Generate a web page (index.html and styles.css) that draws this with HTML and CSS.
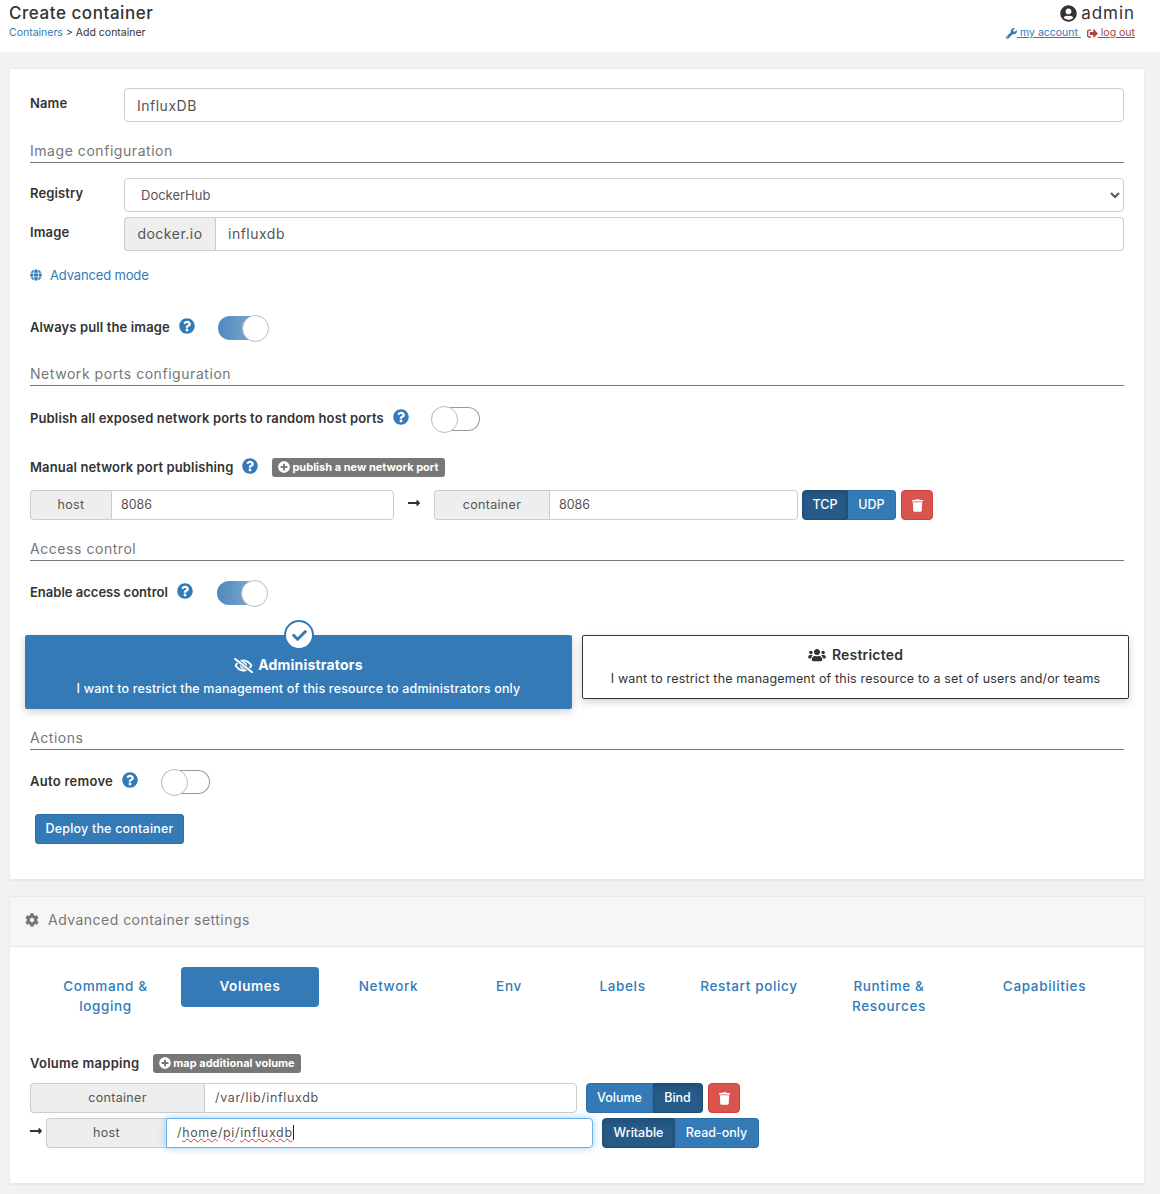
FILE: index.html
```html
<!DOCTYPE html>
<html lang="en">
<head>
<meta charset="utf-8">
<title>Create container</title>
<link rel="stylesheet" href="styles.css">
</head>
<body>
<svg class="sprite" aria-hidden="true">
  <symbol id="i-q" viewBox="0 0 512 512"><path d="M504 256c0 136.997-111.043 248-248 248S8 392.997 8 256C8 119.083 119.043 8 256 8s248 111.083 248 248zM262.655 90c-54.497 0-89.255 22.957-116.549 63.758-3.536 5.286-2.353 12.415 2.715 16.258l34.699 26.31c5.205 3.947 12.621 3.008 16.665-2.122 17.864-22.658 30.113-35.797 57.303-35.797 20.429 0 45.698 13.148 45.698 32.958 0 14.976-12.363 22.667-32.534 33.976C247.128 238.528 216 254.941 216 296v4c0 6.627 5.373 12 12 12h56c6.627 0 12-5.373 12-12v-1.333c0-28.462 83.186-29.647 83.186-106.667 0-58.002-60.165-102-116.531-102zM256 338c-25.365 0-46 20.635-46 46 0 25.364 20.635 46 46 46s46-20.636 46-46c0-25.365-20.635-46-46-46z"/></symbol>
  <symbol id="i-user" viewBox="0 0 496 512"><path d="M248 8C111 8 0 119 0 256s111 248 248 248 248-111 248-248S385 8 248 8zm0 96c48.6 0 88 39.4 88 88s-39.4 88-88 88-88-39.4-88-88 39.4-88 88-88zm0 344c-58.7 0-111.3-26.6-146.5-68.2 18.8-35.4 55.6-59.8 98.5-59.8 2.4 0 4.8.4 7.1 1.1 13 4.2 26.6 6.9 40.9 6.9 14.3 0 28-2.7 40.9-6.9 2.3-.7 4.7-1.1 7.1-1.1 42.9 0 79.7 24.4 98.5 59.8C359.3 421.4 306.7 448 248 448z"/></symbol>
  <symbol id="i-trash" viewBox="0 0 448 512"><path d="M432 32H312l-9.4-18.7A24 24 0 0 0 281.1 0H166.8a23.72 23.72 0 0 0-21.4 13.3L136 32H16A16 16 0 0 0 0 48v32a16 16 0 0 0 16 16h416a16 16 0 0 0 16-16V48a16 16 0 0 0-16-16zM53.2 467a48 48 0 0 0 47.9 45h245.8a48 48 0 0 0 47.9-45L416 128H32z"/></symbol>
  <symbol id="i-check" viewBox="0 0 512 512"><path d="M173.898 439.404l-166.4-166.4c-9.997-9.997-9.997-26.206 0-36.204l36.203-36.204c9.997-9.998 26.207-9.998 36.204 0L192 312.69 432.095 72.596c9.997-9.997 26.207-9.997 36.204 0l36.203 36.204c9.997 9.997 9.997 26.206 0 36.204l-294.4 294.401c-9.998 9.997-26.207 9.997-36.204-.001z"/></symbol>
  <symbol id="i-plus" viewBox="0 0 512 512"><path d="M256 8C119 8 8 119 8 256s111 248 248 248 248-111 248-248S393 8 256 8zm144 276c0 6.6-5.4 12-12 12h-92v92c0 6.6-5.4 12-12 12h-56c-6.6 0-12-5.4-12-12v-92h-92c-6.6 0-12-5.4-12-12v-56c0-6.6 5.4-12 12-12h92v-92c0-6.6 5.4-12 12-12h56c6.6 0 12 5.4 12 12v92h92c6.6 0 12 5.4 12 12v56z"/></symbol>
  <symbol id="i-cog" viewBox="0 0 512 512"><path d="M487.4 315.7l-42.6-24.6c4.3-23.2 4.3-47 0-70.2l42.6-24.6c4.9-2.8 7.1-8.6 5.5-14-11.1-35.6-30-67.8-54.7-94.6-3.8-4.1-10-5.1-14.8-2.3L380.8 110c-17.9-15.4-38.5-27.3-60.8-35.1V25.8c0-5.6-3.9-10.5-9.4-11.7-36.7-8.2-74.3-7.8-109.2 0-5.5 1.2-9.4 6.1-9.4 11.7V75c-22.2 7.9-42.8 19.8-60.8 35.1L88.7 85.5c-4.9-2.8-11-1.9-14.8 2.3-24.7 26.7-43.6 58.9-54.7 94.6-1.7 5.4.6 11.2 5.5 14L67.3 221c-4.3 23.2-4.3 47 0 70.2l-42.6 24.6c-4.9 2.8-7.1 8.6-5.5 14 11.1 35.6 30 67.8 54.7 94.6 3.8 4.1 10 5.1 14.8 2.3l42.6-24.6c17.9 15.4 38.5 27.3 60.8 35.1v49.2c0 5.6 3.9 10.5 9.4 11.7 36.7 8.2 74.3 7.8 109.2 0 5.5-1.2 9.4-6.1 9.4-11.7v-49.2c22.2-7.9 42.8-19.8 60.8-35.1l42.6 24.6c4.9 2.8 11 1.9 14.8-2.3 24.7-26.7 43.6-58.9 54.7-94.6 1.5-5.5-.7-11.3-5.6-14.1zM256 336c-44.1 0-80-35.9-80-80s35.9-80 80-80 80 35.9 80 80-35.9 80-80 80z"/></symbol>
  <symbol id="i-wrench" viewBox="0 0 512 512"><path d="M507.73 109.1c-2.24-9.03-13.54-12.09-20.12-5.51l-74.36 74.36-67.88-11.31-11.31-67.88 74.36-74.36c6.62-6.62 3.43-17.9-5.66-20.16-47.38-11.74-99.55.91-136.58 37.93-39.64 39.64-50.55 97.1-34.05 147.2L18.74 402.76c-24.99 24.99-24.99 65.51 0 90.5 24.99 24.99 65.51 24.99 90.5 0l213.21-213.21c50.12 16.71 107.47 5.68 147.37-34.22 37.07-37.07 49.7-89.32 37.91-136.73zM64 472c-13.25 0-24-10.75-24-24 0-13.26 10.75-24 24-24s24 10.74 24 24c0 13.25-10.75 24-24 24z"/></symbol>
  <symbol id="i-users" viewBox="0 0 640 512"><path d="M96 224c35.3 0 64-28.7 64-64s-28.7-64-64-64-64 28.7-64 64 28.7 64 64 64zm448 0c35.3 0 64-28.7 64-64s-28.7-64-64-64-64 28.7-64 64 28.7 64 64 64zm32 32h-64c-17.6 0-33.5 7.1-45.1 18.6 40.3 22.1 68.9 62 75.1 109.4h66c17.7 0 32-14.3 32-32v-32c0-35.3-28.7-64-64-64zm-256 0c61.9 0 112-50.1 112-112S381.9 32 320 32 208 82.1 208 144s50.1 112 112 112zm76.8 32h-8.3c-20.8 10-43.9 16-68.5 16s-47.6-6-68.5-16h-8.3C179.6 288 128 339.6 128 403.2V432c0 26.5 21.5 48 48 48h288c26.5 0 48-21.5 48-48v-28.8c0-63.6-51.6-115.2-115.2-115.2zm-223.7-13.4C161.5 263.1 145.6 256 128 256H64c-35.3 0-64 28.7-64 64v32c0 17.7 14.3 32 32 32h65.9c6.3-47.4 34.9-87.3 75.2-109.4z"/></symbol>
  <symbol id="i-eye" viewBox="0 0 640 512"><path d="M634 471L36 3.51A16 16 0 0 0 13.51 6l-10 12.49A16 16 0 0 0 6 41l598 467.49a16 16 0 0 0 22.49-2.49l10-12.49A16 16 0 0 0 634 471zM296.79 146.47l134.79 105.38C429.36 191.91 380.48 144 320 144a112.26 112.26 0 0 0-23.21 2.47zm46.42 219.07L208.42 260.16C210.65 320.09 259.53 368 320 368a113 113 0 0 0 23.21-2.46zM320 112c98.65 0 189.09 55 237.93 144a285.53 285.53 0 0 1-44 60.2l37.74 29.5a333.7 333.7 0 0 0 52.9-75.11 32.35 32.35 0 0 0 0-29.19C550.29 135.59 442.93 64 320 64c-36.7 0-71.71 7-104.63 18.81l46.41 36.29c18.94-4.3 38.34-7.1 58.22-7.1zm0 288c-98.65 0-189.08-55-237.93-144a285.47 285.47 0 0 1 44.05-60.19l-37.74-29.5a333.6 333.6 0 0 0-52.89 75.1 32.35 32.35 0 0 0 0 29.19C89.72 376.41 197.08 448 320 448c36.7 0 71.71-7.05 104.63-18.81l-46.41-36.28C359.28 397.2 339.89 400 320 400z"/></symbol>
  <symbol id="i-out" viewBox="0 0 512 512"><path d="M497 273L329 441c-15 15-41 4.5-41-17v-96H152c-13.3 0-24-10.7-24-24v-96c0-13.3 10.7-24 24-24h136V88c0-21.4 25.9-32 41-17l168 168c9.3 9.4 9.3 24.6 0 34zM192 436v-40c0-6.6-5.4-12-12-12H96c-17.7 0-32-14.3-32-32V160c0-17.7 14.3-32 32-32h84c6.6 0 12-5.4 12-12V76c0-6.6-5.4-12-12-12H96c-53 0-96 43-96 96v192c0 53 43 96 96 96h84c6.6 0 12-5.4 12-12z"/></symbol>
  <symbol id="i-globe" viewBox="0 0 496 512"><path d="M336.5 160C322 70.7 287.8 8 248 8s-74 62.7-88.5 152h177zM152 256c0 22.2 1.2 43.5 3.3 64h185.3c2.1-20.5 3.3-41.8 3.3-64s-1.2-43.5-3.3-64H155.3c-2.1 20.5-3.3 41.8-3.3 64zm324.7-96c-28.6-67.9-86.5-120.4-158-141.6 24.4 33.8 41.2 84.7 50 141.6h108zM177.2 18.4C105.8 39.6 47.8 92.1 19.3 160h108c8.7-56.9 25.5-107.8 49.9-141.6zM487.4 192H372.7c2.1 21 3.3 42.5 3.3 64s-1.2 43-3.3 64h114.6c5.5-20.5 8.6-41.8 8.6-64s-3.1-43.5-8.5-64zM120 256c0-21.5 1.2-43 3.3-64H8.6C3.2 212.5 0 233.8 0 256s3.2 43.5 8.6 64h114.6c-2-21-3.2-42.5-3.2-64zm39.5 96c14.5 89.3 48.7 152 88.5 152s74-62.7 88.5-152h-177zm159.3 141.6c71.4-21.2 129.4-73.7 158-141.6h-108c-8.8 56.9-25.6 107.8-50 141.6zM19.3 352c28.6 67.9 86.5 120.4 158 141.6-24.4-33.8-41.2-84.7-50-141.6h-108z"/></symbol>
  <symbol id="i-arrow" viewBox="0 0 448 512"><path d="M313.941 216H12c-6.627 0-12 5.373-12 12v56c0 6.627 5.373 12 12 12h301.941v46.059c0 21.382 25.851 32.09 40.971 16.971l86.059-86.059c9.373-9.373 9.373-24.569 0-33.941l-86.059-86.059c-15.119-15.119-40.971-4.411-40.971 16.971V216z"/></symbol>
</svg>

<header class="topbar">
  <div>
    <div class="title">Create container</div>
    <div class="crumbs"><a class="link" href="#">Containers</a> &gt; Add container</div>
  </div>
  <div class="account">
    <div class="user"><svg class="ico-user"><use href="#i-user"/></svg>admin</div>
    <div class="account-links">
      <a class="link-under" href="#"><svg class="ico-small"><use href="#i-wrench"/></svg> my account </a>
      <a class="link-under danger" href="#"><svg class="ico-small"><use href="#i-out"/></svg> log out</a>
    </div>
  </div>
</header>

<main class="page">
  <section class="card main-card">
    <div class="form-row">
      <label class="row-label">Name</label>
      <input class="control grow" value="InfluxDB">
    </div>

    <h3 class="section first-section">Image configuration</h3>
    <div class="form-row registry">
      <label class="row-label">Registry</label>
      <select class="control grow select"><option>DockerHub</option></select>
    </div>
    <div class="form-row image">
      <label class="row-label">Image</label>
      <div class="group tall grow">
        <span class="addon addon-image">docker.io</span>
        <input class="group-input pad-image" value="influxdb">
      </div>
    </div>
    <div class="advanced"><svg class="ico-globe"><use href="#i-globe"/></svg><a class="link" href="#">Advanced mode</a></div>

    <div class="switch-row pull">
      <span class="strong">Always pull the image</span>
      <svg class="ico-help"><use href="#i-q"/></svg>
      <span class="toggle on toggle-pull"></span>
    </div>

    <h3 class="section net-section">Network ports configuration</h3>
    <div class="switch-row publish">
      <span class="strong">Publish all exposed network ports to random host ports</span>
      <svg class="ico-help"><use href="#i-q"/></svg>
      <span class="toggle toggle-publish"></span>
    </div>

    <div class="manual">
      <span class="strong">Manual network port publishing</span>
      <svg class="ico-help"><use href="#i-q"/></svg>
      <span class="badge badge-port"><svg class="ico-plus"><use href="#i-plus"/></svg>publish a new network port</span>
    </div>

    <div class="port-row">
      <div class="group w-port">
        <span class="addon addon-host">host</span>
        <input class="group-input" value="8086">
      </div>
      <span class="arrow-cell"><svg class="ico-arrow"><use href="#i-arrow"/></svg></span>
      <div class="group w-port">
        <span class="addon addon-cont">container</span>
        <input class="group-input" value="8086">
      </div>
      <div class="btn-group tcp"><span class="btn active w-tcp">TCP</span><span class="btn w-udp">UDP</span></div>
      <span class="btn-del"><svg class="ico-trash"><use href="#i-trash"/></svg></span>
    </div>

    <h3 class="section access-section">Access control</h3>
    <div class="switch-row enable">
      <span class="strong">Enable access control</span>
      <svg class="ico-help"><use href="#i-q"/></svg>
      <span class="toggle on toggle-enable"></span>
    </div>

    <div class="choices">
      <div class="choice selected">
        <span class="check"><svg class="ico-check"><use href="#i-check"/></svg></span>
        <div class="choice-title"><svg class="ico-eye"><use href="#i-eye"/></svg>Administrators</div>
        <div class="choice-text">I want to restrict the management of this resource to administrators only</div>
      </div>
      <div class="choice plain">
        <div class="choice-title"><svg class="ico-users"><use href="#i-users"/></svg>Restricted</div>
        <div class="choice-text">I want to restrict the management of this resource to a set of users and/or teams</div>
      </div>
    </div>

    <h3 class="section actions-section">Actions</h3>
    <div class="switch-row auto">
      <span class="strong">Auto remove</span>
      <svg class="ico-help"><use href="#i-q"/></svg>
      <span class="toggle toggle-auto"></span>
    </div>
    <button class="deploy">Deploy the container</button>
  </section>

  <section class="card adv-card">
    <div class="adv-head"><svg class="ico-cog"><use href="#i-cog"/></svg><span class="adv-title">Advanced container settings</span></div>
    <div class="adv-body">
      <nav class="tabs">
        <a class="tab" href="#">Command &amp; logging</a>
        <a class="tab selected-tab" href="#">Volumes</a>
        <a class="tab" href="#">Network</a>
        <a class="tab" href="#">Env</a>
        <a class="tab" href="#">Labels</a>
        <a class="tab" href="#">Restart policy</a>
        <a class="tab" href="#">Runtime &amp; Resources</a>
        <a class="tab" href="#">Capabilities</a>
      </nav>

      <div class="manual volume-head">
        <span class="strong">Volume mapping</span>
        <span class="badge badge-vol"><svg class="ico-plus"><use href="#i-plus"/></svg>map additional volume</span>
      </div>

      <div class="port-row vol-first">
        <div class="group w-vol1">
          <span class="addon addon-vcont">container</span>
          <input class="group-input pad-vol" value="/var/lib/influxdb">
        </div>
        <div class="btn-group vol-btns"><span class="btn w-volume">Volume</span><span class="btn active w-bind">Bind</span></div>
        <span class="btn-del"><svg class="ico-trash"><use href="#i-trash"/></svg></span>
      </div>
      <div class="port-row vol-second">
        <svg class="ico-arrow arrow-vol"><use href="#i-arrow"/></svg>
        <div class="group w-vol2">
          <span class="addon addon-vhost">host</span>
          <div class="group-input focused pad-vol">/<span class="spell">home</span>/<span class="spell">pi</span>/<span class="spell">influxdb</span><span class="caret"></span></div>
        </div>
        <div class="btn-group vol-btns"><span class="btn active w-writable">Writable</span><span class="btn w-readonly">Read-only</span></div>
      </div>
    </div>
  </section>
</main>
</body>
</html>
```
FILE: styles.css
```css
* { box-sizing: border-box; }
html, body { margin: 0; padding: 0; }
body {
  background: #f2f2f2;
  font-family: Inter, "Noto Sans", sans-serif;
  font-size: 13px;
  color: #333;
  width: 1160px;
  height: 1194px;
  overflow: hidden;
}
.sprite { display: none; }
svg { fill: currentColor; display: block; }
a { text-decoration: none; }
.link { color: #337ab7; }

.topbar {
  height: 52px;
  background: #fff;
  display: flex;
  justify-content: space-between;
  padding: 0 25px 0 9px;
}
.title { font-size: 17px; font-weight: 500; line-height: 20px; margin-top: 3px; letter-spacing: .55px; color: #333; }
.crumbs { font-size: 10.5px; line-height: 14px; margin-top: 3px; color: #333; }
.account { display: flex; flex-direction: column; align-items: flex-end; }
.user { display: flex; align-items: center; font-size: 17px; line-height: 20px; margin-top: 3px; letter-spacing: .95px; }
.ico-user { width: 17px; height: 17px; margin-right: 4px; }
.account-links { display: flex; gap: 6px; font-size: 10.5px; line-height: 14px; margin-top: 3px; }
.link-under { color: #337ab7; text-decoration: underline; display: inline-flex; align-items: center; white-space: pre; }
.danger { color: #a94442; }
.ico-small { width: 11px; height: 11px; }

.page { padding: 16px 15px 0 9px; }
.card {
  background: #fff;
  border: 1px solid #eaeaea;
  box-shadow: 0 1px 1px rgba(0,0,0,.05);
  border-radius: 2px;
}
.main-card { height: 812px; padding: 19px 20px 0; }
.adv-card { height: 288px; margin-top: 16px; }

.form-row { display: flex; height: 34px; }
.row-label { width: 94px; flex: none; font-weight: 600; line-height: 30px; font-size: 13px; color: #333; letter-spacing: .13px; }
.grow { flex: 1; min-width: 0; }
.control {
  height: 34px;
  border: 1px solid #ccc;
  border-radius: 4px;
  padding: 0 12px;
  font: 14px Inter, "Noto Sans", sans-serif;
  color: #555;
  background: #fff;
  letter-spacing: .5px;
}
.select { padding-left: 12px; font-size: 13px; letter-spacing: 0; }
.registry { margin-top: 15px; }
.image { margin-top: 5px; }

.section {
  height: 22px;
  margin: 0;
  border-bottom: 1px solid #777;
  font-size: 14px;
  font-weight: 400;
  line-height: 20px;
  color: #767676;
  letter-spacing: .55px;
}
.first-section { margin-top: 19px; }
.net-section { margin-top: 23px; }
.access-section { margin-top: 19px; }
.actions-section { margin-top: 19px; }

.group { display: flex; height: 30px; }
.tall { height: 34px; }
.addon {
  flex: none;
  background: #eee;
  border: 1px solid #ccc;
  border-right: 0;
  border-radius: 4px 0 0 4px;
  display: flex;
  align-items: center;
  justify-content: center;
  color: #555;
  font-size: 12.5px;
  letter-spacing: .3px;
  padding-bottom: 1px;
}
.group-input {
  flex: 1;
  min-width: 0;
  border: 1px solid #ccc;
  border-radius: 0 4px 4px 0;
  padding: 0 9px;
  font: 12.5px/28px Inter, "Noto Sans", sans-serif;
  color: #555;
  background: #fff;
  outline: 0;
}
.addon-image { width: 91px; font-size: 14px; letter-spacing: .5px; }
.pad-image { padding-left: 12px; font-size: 14px; letter-spacing: .5px; }
.addon-host { width: 81px; }
.addon-cont { width: 115px; }
.addon-vcont { width: 174px; }
.addon-vhost { width: 120px; }
.pad-vol { padding-left: 10px; letter-spacing: .65px; }
.w-port { width: 364px; }
.w-vol1 { width: 547px; }
.w-vol2 { width: 547px; }

.advanced { display: flex; align-items: center; height: 20px; margin-top: 14px; font-size: 13px; letter-spacing: -.15px; }
.ico-globe { width: 12px; height: 12px; color: #337ab7; margin-right: 8px; }

.switch-row { display: flex; align-items: center; height: 26px; }
.strong { font-weight: 600; font-size: 13px; color: #333; white-space: nowrap; letter-spacing: .13px; }
.switch-row .strong { margin-bottom: 2px; }
.enable .strong { letter-spacing: 0; }
.auto .strong { letter-spacing: .27px; }
.volume-head .strong { letter-spacing: .27px; }
.ico-help { width: 16px; height: 16px; color: #337ab7; margin: 0 0 4px 9px; flex: none; }
.pull { margin-top: 30px; }
.publish { margin-top: 20px; }
.enable { margin-top: 19px; }
.auto { margin-top: 19px; }

.toggle {
  position: relative;
  display: block;
  width: 49px;
  height: 24px;
  margin-left: 23px;
  border-radius: 12px;
  border: 1px solid #999;
  border-left-color: #ccc;
  background: #fff;
  flex: none;
}
.toggle::after {
  content: "";
  position: absolute;
  left: -1px;
  top: -2px;
  width: 25px;
  height: 25px;
  border-radius: 50%;
  background: #fff;
  border: 1px solid #bbb;
}
.toggle.on {
  border: 0;
  background: linear-gradient(to right, #4f89bf, #8db3d6);
}
.toggle.on::after { left: 24px; top: -1px; }
.toggle-pull { margin-left: 23px; }
.toggle-publish { margin-left: 22px; }
.toggle-enable { margin-left: 24px; }

.manual { display: flex; align-items: center; height: 20px; margin-top: 25px; }
.manual .ico-help { margin-bottom: 3px; }
.badge {
  display: inline-flex;
  align-items: center;
  height: 19px;
  background: #777;
  color: #fff;
  font-weight: 700;
  font-size: 11px;
  border-radius: 3px;
  padding: 0 6px;
  margin-left: 14px;
  flex: none;
}
.ico-plus { width: 12px; height: 12px; margin-right: 2px; }

.port-row { display: flex; align-items: stretch; height: 30px; margin-top: 13px; }
.arrow-cell { width: 40px; flex: none; display: flex; justify-content: center; align-items: flex-start; padding-top: 6px; }
.ico-arrow { width: 12px; height: 14px; color: #333; }
.btn-group { display: flex; margin-left: 4px; flex: none; }
.btn {
  display: flex;
  align-items: center;
  justify-content: center;
  background: #337ab7;
  border: 1px solid #2e6da4;
  color: #fff;
  font-size: 12.5px;
  font-weight: 500;
  padding-bottom: 1px;
}
.btn:first-child { border-radius: 4px 0 0 4px; }
.btn:last-child { border-radius: 0 4px 4px 0; border-left: 0; }
.btn.active { background: #265a88; border-color: #204d74; box-shadow: inset 0 3px 5px rgba(0,0,0,.125); }
.w-tcp { width: 46px; }
.w-udp { width: 48px; }
.btn-del {
  width: 32px;
  margin-left: 5px;
  flex: none;
  display: flex;
  align-items: center;
  justify-content: center;
  background: #d9534f;
  border: 1px solid #d43f3a;
  border-radius: 4px;
  color: #fff;
}
.ico-trash { width: 11px; height: 13px; }

.choices { display: grid; grid-template-columns: 1fr 1fr; gap: 10px; margin: 29px -5px 0; height: 74px; align-items: start; }
.choice {
  position: relative;
  border-radius: 2px;
  text-align: center;
  box-shadow: 0 3px 8px rgba(0,0,0,.18);
}
.choice.selected { height: 74px; background: #337ab7; color: #fff; padding-top: 20px; font-weight: 500; }
.choice.plain { height: 64px; background: #fff; border: 1px solid #333; color: #333; padding-top: 9px; }
.check {
  position: absolute;
  left: 259px;
  top: -15px;
  width: 30px;
  height: 30px;
  border-radius: 50%;
  background: #fff;
  border: 2px solid #337ab7;
  display: flex;
  align-items: center;
  justify-content: center;
  color: #337ab7;
}
.ico-check { width: 15px; height: 15px; }
.choice-title { display: flex; align-items: center; justify-content: center; font-size: 14px; font-weight: 600; line-height: 20px; letter-spacing: .2px; }
.selected .choice-title { font-weight: 700; }
.choice-text { font-size: 12.5px; line-height: 18px; margin-top: 5px; letter-spacing: .18px; }
.ico-eye { width: 19px; height: 15px; margin-right: 5px; stroke: currentColor; stroke-width: 24; overflow: visible; }
.ico-users { width: 18px; height: 14px; margin-right: 6px; }

.deploy {
  display: block;
  width: 149px;
  height: 30px;
  margin: 19px 0 0 5px;
  border: 1px solid #2e6da4;
  border-radius: 3px;
  background: #337ab7;
  color: #fff;
  font: 500 12.5px Inter, "Noto Sans", sans-serif;
  letter-spacing: .2px;
  padding: 0 0 2px;
}

.adv-head {
  height: 50px;
  background: #f6f6f6;
  border-bottom: 1px solid #e6e6e6;
  display: flex;
  align-items: center;
  padding: 0 0 4px 15px;
  font-size: 14px;
  color: #767676;
  letter-spacing: .47px;
}
.ico-cog { width: 14px; height: 14px; margin-right: 9px; color: #767676; }
.adv-body { padding: 20px 20px 0; }
.tabs { display: grid; grid-template-columns: 151px 138px 139px 102px 125px 128px 152px 159px; height: 76px; }
.tab {
  height: 40px;
  padding: 9px 10px 0;
  text-align: center;
  color: #337ab7;
  font-size: 13.5px;
  font-weight: 500;
  line-height: 20px;
  letter-spacing: .65px;
}
.selected-tab { background: #337ab7; color: #fff; border-radius: 4px; font-weight: 600; }
.volume-head { margin-top: 10px; }
.vol-first { margin-top: 10px; }
.vol-second { margin-top: 5px; }
.vol-btns { margin-left: 9px; }
.arrow-vol { margin: 6px 4px 0 0; flex: none; }
.w-volume { width: 67px; }
.w-bind { width: 50px; }
.w-writable { width: 73px; }
.w-readonly { width: 84px; }
.focused {
  border-color: #66afe9;
  border-radius: 0 4px 4px 0;
  box-shadow: 0 0 8px rgba(102,175,233,.6);
  position: relative;
}
.spell { text-decoration: underline wavy #d33; text-decoration-thickness: 1px; }
.caret { display: inline-block; width: 1px; height: 15px; background: #222; vertical-align: -3px; }
```
